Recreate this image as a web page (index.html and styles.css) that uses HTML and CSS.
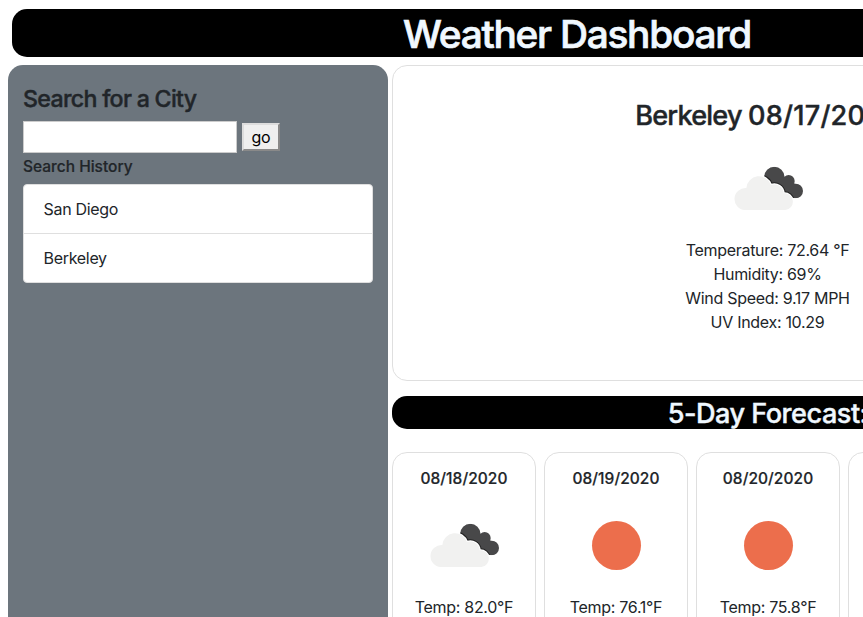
FILE: index.html
```
<!DOCTYPE html>
<html lang="en">
<head>
<meta charset="utf-8">
<title>Weather Dashboard</title>
<link rel="stylesheet" href="styles.css">
</head>
<body>
<svg width="0" height="0" class="defs" aria-hidden="true">
  <clipPath id="back-clip"><circle cx="163" cy="81" r="30.500"/><circle cx="206" cy="93" r="18"/><circle cx="227" cy="123" r="22"/><path d="M150 85L206 80L236 115L215 143L165 110Z"/></clipPath>
  <symbol id="clouds" viewBox="-6 -36 300 300">
    <g clip-path="url(#back-clip)">
      <rect x="120" y="40" width="140" height="120" fill="#484849"/>
      <path d="M76 180A33 33 0 1 1 79 114A38 38 0 0 1 153 105A28 28 0 0 1 191 130A25 25 0 0 1 196 180Z" fill="none" stroke="#222" stroke-width="12"/>
    </g>
    <path d="M74 180A33 33 0 1 1 79 114A38 38 0 0 1 153 105A28 28 0 0 1 191 130A25 25 0 0 1 196 180Z" fill="#f1f1f0" stroke="#fff" stroke-width="6" paint-order="stroke"/>
  </symbol>
  <symbol id="sun" viewBox="0 0 100 100"><circle cx="50.500" cy="50.500" r="24.500" fill="#ec6e4c"/></symbol>
</svg>
<header class="banner"><h1>Weather Dashboard</h1></header>
<main class="layout">
  <aside class="sidebar">
    <h4>Search for a City</h4>
    <form class="search"><input type="text" aria-label="City"><button type="button">go</button></form>
    <h6>Search History</h6>
    <ul class="history"><li>San Diego</li><li>Berkeley</li></ul>
  </aside>
  <section class="content">
    <article class="current">
      <h3><span class="city">Berkeley </span>08/17/2020</h3>
      <svg class="icon"><use href="#clouds"/></svg>
      <p>Temperature: 72.64 °F</p>
      <p>Humidity: 69%</p>
      <p>Wind Speed: 9.17 MPH</p>
      <p>UV Index: 10.29</p>
    </article>
    <h3 class="forecast-title">5-Day Forecast:</h3>
    <div class="forecast">
      <article class="day"><h6>08/18/2020</h6><svg class="icon"><use href="#clouds"/></svg><p>Temp: 82.0°F</p></article>
      <article class="day"><h6>08/19/2020</h6><svg class="icon"><use href="#sun"/></svg><p>Temp: 76.1°F</p></article>
      <article class="day"><h6>08/20/2020</h6><svg class="icon"><use href="#sun"/></svg><p>Temp: 75.8°F</p></article>
      <article class="day"></article>
      <article class="day"></article>
    </div>
  </section>
</main>
</body>
</html>
```
FILE: styles.css
```
* { box-sizing: border-box; }
html, body { height: 100%; }
body {
  margin: 0;
  padding: 9px 0 0 8px;
  overflow: hidden;
  background: #fff;
  color: #212529;
  font: 16px/24px Inter, "Liberation Sans", sans-serif;
  letter-spacing: -0.3px;
}
h1, h3, h4, h6, p, ul { margin: 0; padding: 0; }
h1, h3, h4, h6 { font-weight: 500; -webkit-text-stroke: 0.4px currentColor; }
.defs { position: absolute; }
.banner {
  width: 1130px;
  height: 48px;
  margin: 0 0 8px 4px;
  border-radius: 15px;
  background: #000;
  color: aliceblue;
  text-align: center;
}
h1 { font-size: 38.8px; line-height: 50px; letter-spacing: -1.25px; -webkit-text-stroke-width: 0.7px; }
.layout { display: flex; gap: 4px; width: 1136px; }
.sidebar {
  flex: none;
  width: 380px;
  height: 700px;
  padding: 19px 15px;
  border-radius: 15px;
  background: #6c757d;
}
h4 { font-size: 23.2px; line-height: 31px; letter-spacing: -0.7px; }
.search { display: flex; align-items: center; gap: 5px; margin-top: 6px; height: 32px; }
.search input { width: 214px; height: 32px; border: 1px solid #ccc; background: #fff; padding: 1px 2px; }
.search button {
  width: 38px;
  height: 28px;
  padding: 0;
  border: 2px outset #ddd;
  background: #efefef;
  color: #000;
  font: inherit;
  letter-spacing: inherit;
}
h6 { font-size: 15.5px; line-height: 19px; letter-spacing: 0.05px; -webkit-text-stroke-width: 0.2px; }
.sidebar h6 { margin: 4px 0 8px; letter-spacing: 0; }
.history { list-style: none; border: 1px solid #dfdfdf; border-radius: 4px; background: #fff; overflow: hidden; }
.history li { padding: 12px 20px 12px 19.5px; height: 48px; }
.history li + li { border-top: 1px solid #dfdfdf; height: 49px; }
.content { flex: none; width: 751px; }
.current {
  height: 316px;
  padding-top: 32px;
  border: 1px solid #dfdfdf;
  border-radius: 15px;
  text-align: center;
}
h3 { font-size: 27.1px; line-height: 35px; letter-spacing: 0.2px; }
.city { letter-spacing: -0.8px; }
.icon { display: block; width: 100px; height: 100px; margin: 0 auto; }
.current .icon { margin-top: 5px; }
.forecast-title {
  height: 33px;
  margin: 15px 0 23px;
  border-radius: 15px;
  background: #000;
  color: aliceblue;
  text-align: center;
  letter-spacing: -0.5px;
}
.forecast { display: flex; gap: 8px; }
.day {
  flex: none;
  width: 144px;
  height: 260px;
  padding-top: 16px;
  border: 1px solid #dfdfdf;
  border-radius: 15px;
  text-align: center;
}
.day .icon { margin-top: 7px; }
```
